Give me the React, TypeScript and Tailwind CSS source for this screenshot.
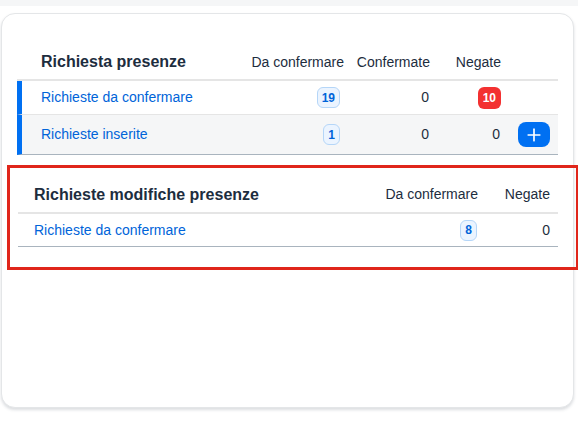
import { Plus } from 'lucide-react'

// Counter pill used in the tables
function Badge({ value, tone = 'info' }: { value: number; tone?: 'info' | 'error' }) {
  if (tone === 'error') {
    return (
      <span className="inline-flex h-[22px] min-w-[23px] items-center justify-center rounded-[6px] bg-[#f33131] px-[5px] text-[12px] font-bold text-white">
        {value}
      </span>
    )
  }
  return (
    <span className="inline-flex h-[21px] min-w-[16px] items-center justify-center rounded-[6px] border border-[#b5d6f8] bg-[#ebf4ff] px-[4px] text-[12px] font-bold text-[#0064d9]">
      {value}
    </span>
  )
}

export default function App() {
  return (
    <div className="min-h-[430px] bg-white font-['Liberation_Sans',Arial,sans-serif] text-[#1d2d3e]">
      <div className="h-[6px] bg-[#f5f6f7]" />

      <div className="ml-[1px] mr-[4px] mt-[7px] h-[395px] rounded-[14px] border border-[#e4e6e8] bg-white px-[15px] pt-[32px] shadow-[0_2px_3px_rgba(60,70,90,0.18)]">
        {/* Richiesta presenze */}
        <div className="w-[541px]">
          <div className="flex h-[35px] items-center border-b-2 border-[#e5e5e5] pb-[1px] text-[14px]">
            <div className="flex-1 pl-[24px] text-[16px] font-bold">Richiesta presenze</div>
            <div className="w-[109px] text-right">Da confermare</div>
            <div className="w-[86px] text-right">Confermate</div>
            <div className="w-[71px] text-right">Negate</div>
            <div className="w-[57px]" />
          </div>

          <div className="flex h-[34px] items-center border-b border-l-[5px] border-b-[#e5e5e5] border-l-[#0070f2] text-[14px]">
            <a className="flex-1 pl-[19px] text-[#0064d9]">Richieste da confermare</a>
            <div className="w-[109px] pr-[4px] text-right"><Badge value={19} /></div>
            <div className="w-[86px] pr-[1px] text-right">0</div>
            <div className="w-[71px] text-right"><Badge value={10} tone="error" /></div>
            <div className="w-[57px]" />
          </div>

          <div className="flex h-[40px] items-center border-b border-l-[5px] border-b-[#a9b4be] border-l-[#0070f2] bg-[#f5f6f7] text-[14px]">
            <a className="flex-1 pl-[19px] text-[#0064d9]">Richieste inserite</a>
            <div className="w-[109px] pr-[4px] text-right"><Badge value={1} /></div>
            <div className="w-[86px] pr-[1px] text-right">0</div>
            <div className="w-[71px] pr-[1px] text-right">0</div>
            <div className="flex w-[57px] justify-end pr-[8px]">
              <button className="flex h-[25px] w-[32px] items-center justify-center rounded-[8px] bg-[#0070f2] text-white">
                <Plus size={20} strokeWidth={2} />
              </button>
            </div>
          </div>
        </div>

        {/* Richieste modifiche presenze */}
        <div className="ml-[-10px] mr-[-21px] mt-[10px] border-[3px] border-[#e0261b] pb-[20px] pl-[8px] pr-[18px] pt-[9px]">
          <div className="flex h-[37px] items-center border-b-2 border-[#e5e5e5] text-[14px]">
            <div className="flex-1 pl-[16px] text-[16px] font-bold">Richieste modifiche presenze</div>
            <div className="w-[120px] text-right">Da confermare</div>
            <div className="w-[80px] pr-[8px] text-right">Negate</div>
          </div>
          <div className="flex h-[33px] items-center border-b border-[#a9b4be] text-[14px]">
            <a className="flex-1 pl-[16px] text-[#0064d9]">Richieste da confermare</a>
            <div className="w-[120px] pr-[1px] text-right"><Badge value={8} /></div>
            <div className="w-[80px] pr-[8px] text-right">0</div>
          </div>
        </div>
      </div>
    </div>
  )
}
